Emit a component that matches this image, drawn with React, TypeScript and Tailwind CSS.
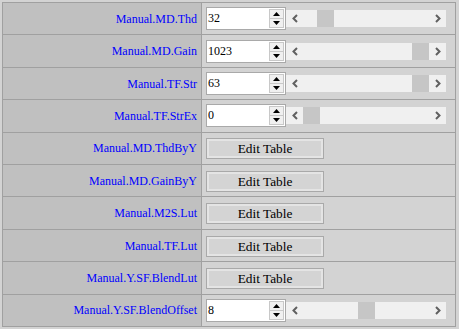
import React from 'react'

type Row =
  | { label: string; kind: 'num'; value: number; max: number }
  | { label: string; kind: 'table' }

const ROWS: Row[] = [
  { label: 'Manual.MD.Thd', kind: 'num', value: 32, max: 255 },
  { label: 'Manual.MD.Gain', kind: 'num', value: 1023, max: 1023 },
  { label: 'Manual.TF.Str', kind: 'num', value: 63, max: 63 },
  { label: 'Manual.TF.StrEx', kind: 'num', value: 0, max: 255 },
  { label: 'Manual.MD.ThdByY', kind: 'table' },
  { label: 'Manual.MD.GainByY', kind: 'table' },
  { label: 'Manual.M2S.Lut', kind: 'table' },
  { label: 'Manual.TF.Lut', kind: 'table' },
  { label: 'Manual.Y.SF.BlendLut', kind: 'table' },
  { label: 'Manual.Y.SF.BlendOffset', kind: 'num', value: 8, max: 16 },
]

const Spinner = () => (
  <div className="absolute right-[1px] top-[1px] bottom-[1px] w-[15px] flex flex-col border border-[#c8c8c8] bg-[#f0f0f0]">
    <div className="flex-1 flex items-center justify-center border-b border-[#c8c8c8]">
      <svg width="7" height="4" viewBox="0 0 7 4">
        <polygon points="3.5,0 7,4 0,4" fill="#000" />
      </svg>
    </div>
    <div className="flex-1 flex items-center justify-center">
      <svg width="7" height="4" viewBox="0 0 7 4">
        <polygon points="0,0 7,0 3.5,4" fill="#000" />
      </svg>
    </div>
  </div>
)

const Chevron = ({ dir }: { dir: 'left' | 'right' }) => (
  <svg width="6" height="9" viewBox="0 0 6 9">
    <polyline
      points={dir === 'left' ? '5,1 1.5,4.5 5,8' : '1,1 4.5,4.5 1,8'}
      fill="none"
      stroke="#606060"
      strokeWidth="2"
    />
  </svg>
)

// horizontal scrollbar look-alike: 17px arrows, 17px thumb, 109px of travel
const ScrollBar = ({ value, max }: { value: number; max: number }) => {
  const before = Math.round((value / max) * 109)
  return (
    <div className="flex h-[17px] w-[160px] bg-[#f0f0f0]">
      <div className="flex w-[17px] items-center justify-center">
        <Chevron dir="left" />
      </div>
      <div className="flex flex-1">
        <div className="shrink-0" style={{ width: before }} />
        <div className="h-[17px] w-[17px] shrink-0 bg-[#c6c6c6]" />
      </div>
      <div className="flex w-[17px] items-center justify-center">
        <Chevron dir="right" />
      </div>
    </div>
  )
}

const NumCell = ({ value, max }: { value: number; max: number }) => (
  <div className="flex items-center pl-[4px]">
    <div className="relative h-[23px] w-[80px] border border-[#a9a9a9] bg-white">
      <span className="absolute left-[1px] top-[2px] text-[12px] leading-[16px] text-black">
        {value}
      </span>
      <Spinner />
    </div>
    <ScrollBar value={value} max={max} />
  </div>
)

const EditButton = () => (
  <div className="pl-[4px]">
    <button className="h-[21px] w-[118px] border border-[#a9a9a9] bg-[#d4d4d4] font-normal shadow-[inset_0_0_0_2px_#e4e4e4] text-[13.33px] leading-[17px] text-black">
      Edit Table
    </button>
  </div>
)

export default function App() {
  return (
    <div
      className="h-[329px] w-[459px] bg-[#d3d3d3] pl-[2px] pt-[2px]"
      style={{ fontFamily: '"Liberation Serif", "Times New Roman", serif' }}
    >
      <div className="flex h-[325px] w-[454px] flex-col border border-[#a0a0a0]">
        {ROWS.map((row, i) => (
          <div
            key={row.label}
            className={`flex flex-1 ${i < ROWS.length - 1 ? 'border-b border-[#a0a0a0]' : ''}`}
          >
            <div className="flex w-[199px] items-center justify-end border-r border-[#a0a0a0] bg-[#c0c0c0] pr-[4px] text-[12px] text-[#0000ff]">
              {row.label}
            </div>
            <div className="flex flex-1 items-center bg-[#d3d3d3]">
              {row.kind === 'num' ? (
                <NumCell value={row.value} max={row.max} />
              ) : (
                <EditButton />
              )}
            </div>
          </div>
        ))}
      </div>
    </div>
  )
}
